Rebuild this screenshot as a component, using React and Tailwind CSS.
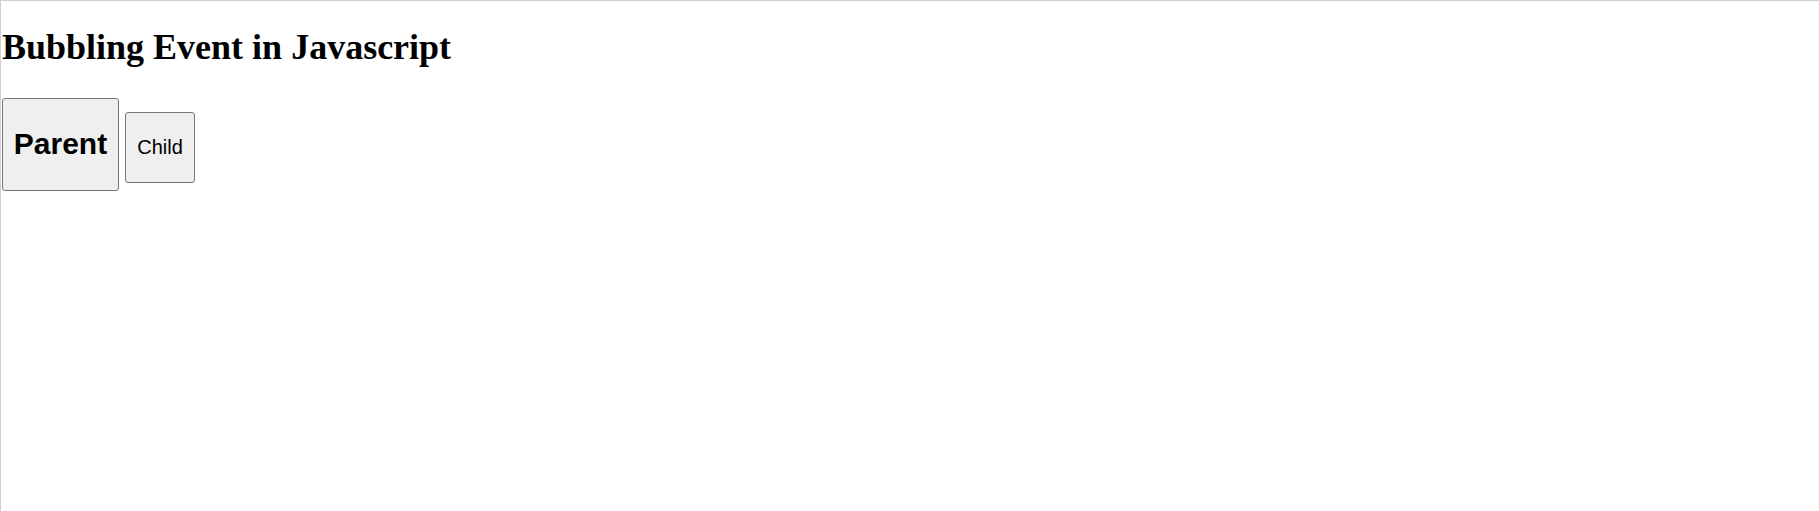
export default function App() {
  return (
    <div className="min-h-[511px] border-t border-l border-[#cfcfcf] bg-white pl-px">
      <h1 className="mt-[26px] text-[36px] leading-[41px] font-bold text-black [font-family:'Liberation_Serif',serif]">
        Bubbling Event in Javascript
      </h1>
      <div className="mt-[30px] flex items-start gap-[6px] [font-family:'Liberation_Sans',Arial,sans-serif]">
        <button className="flex h-[93px] w-[117px] items-center justify-center rounded-[3px] border border-[#767676] bg-[#efefef] pb-[2px] text-[30px] font-bold text-black">
          Parent
        </button>
        <button className="mt-[14px] flex h-[71px] w-[70px] items-center justify-center rounded-[3px] border border-[#767676] bg-[#efefef] pb-[2px] text-[20px] text-black">
          Child
        </button>
      </div>
    </div>
  );
}
